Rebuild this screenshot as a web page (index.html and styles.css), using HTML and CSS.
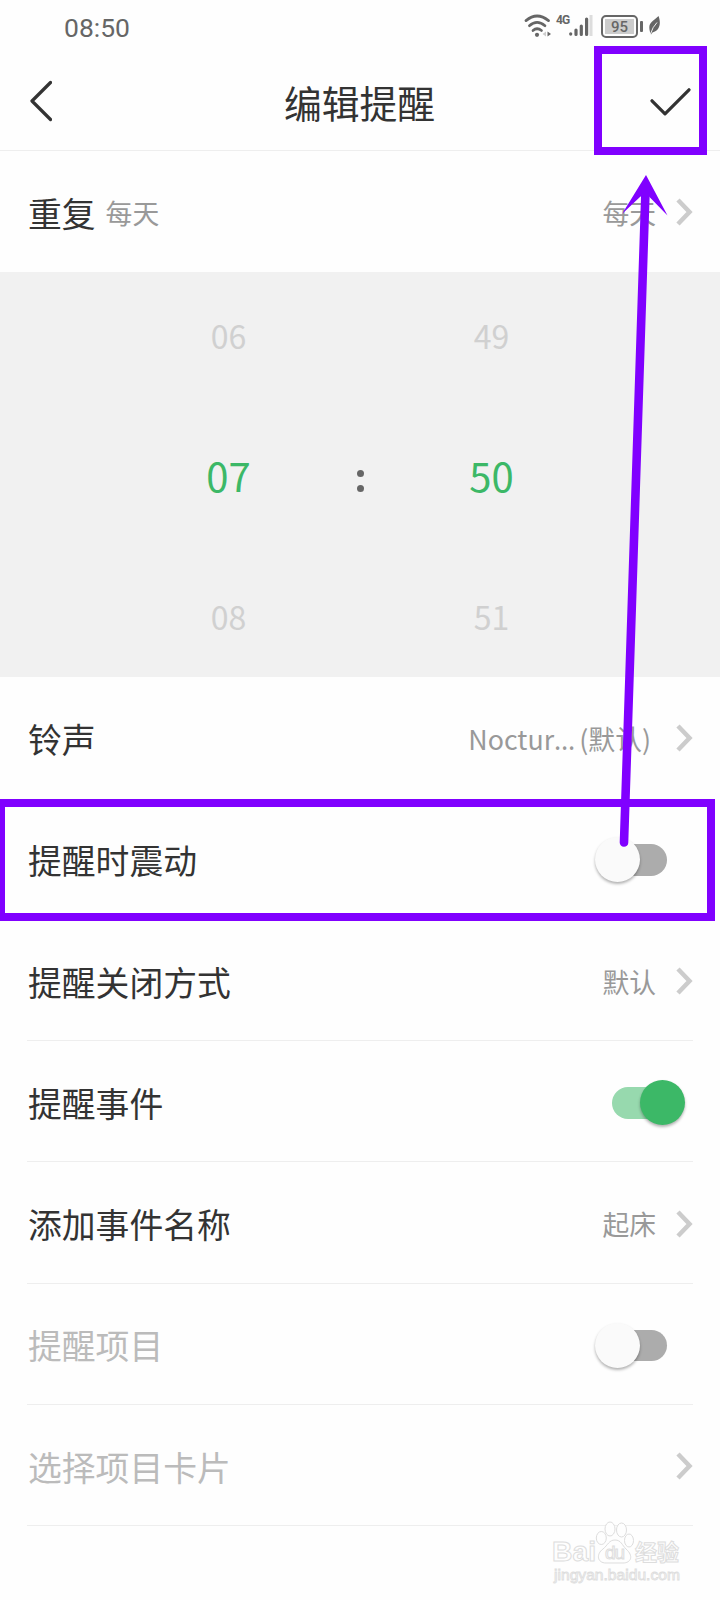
FILE: index.html
```html
<!DOCTYPE html>
<html lang="zh-CN">
<head>
    <meta charset="UTF-8">
    <meta name="viewport" content="width=device-width, initial-scale=1.0">
    <title>编辑提醒</title>
    <link rel="stylesheet" href="styles.css">
</head>
<body>
    <div class="status-bar">
        <span class="clock">08:50</span>
        <div class="status-icons">
            <svg class="wifi" width="27" height="24" viewBox="0 0 27 24">
                <g fill="none" stroke="#666" stroke-width="2.7" stroke-linecap="round">
                    <path d="M2 6.6Q13 -2.6 24.5 6.6"/>
                    <path d="M5.4 11.7Q13 5 21 11.7"/>
                    <path d="M9 16.5Q13 13 17.5 16.5"/>
                </g>
                <circle cx="13" cy="20.8" r="2.1" fill="#666"/>
                <path d="M22 17.5v5l-3.5-2.500z" fill="#ccc"/>
                <path d="M23.500 17.5v5l3.500-2.500z" fill="#666"/>
            </svg>
            <span class="network">4G</span>
            <svg class="signal" width="24" height="24" viewBox="0 0 24 24">
                <g stroke="#666" stroke-width="3.2" stroke-linecap="round">
                    <path d="M1.7 20.8v.3M7 17v4.5M12.300 13v8.500M17.600 6v15.500"/>
                </g>
                <path d="M22 2v21" stroke="#ddd" stroke-width="3"/>
            </svg>
            <div class="battery"><span class="battery-level">95</span></div>
            <svg class="leaf" width="13" height="20" viewBox="0 0 13 20">
                <path d="M10.500 1C13 7 12.500 15.500 4.500 17.500L3 19.500 2 17C-.5 8 4 7 10.500 1z" fill="#666"/>
                <path d="M2.500 19Q4.500 12 9 7.500" fill="none" stroke="#fefefe" stroke-width=".9"/>
            </svg>
        </div>
    </div>

    <div class="header">
        <svg class="back" width="24" height="42" viewBox="0 0 24 42">
            <path d="M22.500 2.500L4 21l18.500 18.500"/>
        </svg>
        <h1 class="title">编辑提醒</h1>
        <svg class="confirm" width="42" height="30" viewBox="0 0 42 30">
            <path d="M3 14.800L16 27.800 40 3.800"/>
        </svg>
    </div>

    <div class="row plain">
        <span class="label">重复</span>
        <span class="note">每天</span>
        <span class="value">每天</span>
        <svg class="arrow" width="17" height="28" viewBox="0 0 17 28"><path d="M2 2l11.500 12L2 26"/></svg>
    </div>

    <div class="picker">
        <div class="wheel">
            <span>06</span>
            <span class="selected">07</span>
            <span>08</span>
        </div>
        <div class="colon"><i></i><i></i></div>
        <div class="wheel">
            <span>49</span>
            <span class="selected">50</span>
            <span>51</span>
        </div>
    </div>

    <div class="list">
        <div class="row plain">
            <span class="label">铃声</span>
            <span class="value ringtone">Noctur<span class="dots">…</span>(默认)</span>
            <svg class="arrow" width="17" height="28" viewBox="0 0 17 28"><path d="M2 2l11.500 12L2 26"/></svg>
        </div>
        <div class="row plain">
            <span class="label">提醒时震动</span>
            <span class="switch"></span>
        </div>
        <div class="row">
            <span class="label">提醒关闭方式</span>
            <span class="value">默认</span>
            <svg class="arrow" width="17" height="28" viewBox="0 0 17 28"><path d="M2 2l11.500 12L2 26"/></svg>
        </div>
        <div class="row">
            <span class="label">提醒事件</span>
            <span class="switch on"></span>
        </div>
        <div class="row">
            <span class="label">添加事件名称</span>
            <span class="value">起床</span>
            <svg class="arrow" width="17" height="28" viewBox="0 0 17 28"><path d="M2 2l11.500 12L2 26"/></svg>
        </div>
        <div class="row disabled">
            <span class="label">提醒项目</span>
            <span class="switch"></span>
        </div>
        <div class="row disabled">
            <span class="label">选择项目卡片</span>
            <svg class="arrow" width="17" height="28" viewBox="0 0 17 28"><path d="M2 2l11.500 12L2 26"/></svg>
        </div>
    </div>

    <!-- watermark -->
    <svg class="watermark" width="150" height="70" viewBox="0 0 150 70">
        <g class="outline">
            <ellipse cx="51.300" cy="20" rx="5" ry="6.500"/>
            <ellipse cx="60" cy="11" rx="5" ry="7"/>
            <ellipse cx="71.500" cy="12" rx="5" ry="7"/>
            <ellipse cx="79" cy="22.500" rx="4.500" ry="6.500"/>
            <path d="M65 22c6 0 7 5 11 9 8 7 5 14-3 14H56c-9 0-10-9-3-14 5-4 6-9 12-9z"/>
            <text class="brand" x="2" y="43" textLength="44" lengthAdjust="spacingAndGlyphs">Bai</text>
            <text class="brand-du" x="55" y="41" textLength="20">du</text>
            <text class="brand-cn" x="85" y="42" textLength="44">经验</text>
            <text class="site" x="4" y="61.500" textLength="126" lengthAdjust="spacingAndGlyphs">jingyan.baidu.com</text>
        </g>
    </svg>

    <!-- marks over the screen: confirm button, vibration row, arrow between them -->
    <div class="mark mark-confirm"></div>
    <div class="mark mark-row"></div>
    <svg class="mark-arrow" width="60" height="690" viewBox="610 170 60 690">
        <path d="M645.300 197L624 842.500" stroke="#8000ff" stroke-width="8.600" stroke-linecap="round"/>
        <path d="M646 175L667.500 215.500 649 196.500 640.500 196.500 622 214z" fill="#8000ff"/>
    </svg>
</body>
</html>
```
FILE: styles.css
```css
* {
    box-sizing: border-box;
}
body {
    position: relative;
    margin: 0;
    width: 720px;
    height: 1600px;
    overflow: hidden;
    background-color: #fefefe;
    color: #333;
    font-family: "Noto Sans CJK SC", sans-serif;
}
svg {
    display: block;
    flex: none;
}

/* status bar */
.status-bar {
    display: flex;
    justify-content: space-between;
    height: 51px;
    padding: 12px 59px 0 64px;
    color: #666;
}
.clock {
    font-family: Roboto, sans-serif;
    font-size: 26.5px;
    line-height: 31px;
}
.status-icons {
    display: flex;
    align-items: flex-start;
}
.wifi {
    margin-top: 2px;
}
.network {
    width: 13px;
    margin: 2px 0 0 5px;
    font: bold 12px/12px Roboto, sans-serif;
    letter-spacing: -1px;
}
.signal {
    margin-top: 1px;
}
.battery {
    position: relative;
    width: 37px;
    height: 23px;
    margin: 3px 0 0 8px;
    padding: 2px;
    border: 2px solid #666;
    border-radius: 5px;
}
.battery::after {
    content: "";
    position: absolute;
    top: 4px;
    right: -7px;
    width: 3px;
    height: 11px;
    border-radius: 1px;
    background-color: #666;
}
.battery-level {
    display: block;
    height: 15px;
    background-color: #ccc;
    font: 500 15px/16px Roboto, sans-serif;
    text-align: center;
}
.leaf {
    margin: 3px 0 0 10px;
}

/* header */
.header {
    display: flex;
    align-items: center;
    justify-content: space-between;
    height: 100px;
    padding: 0 29px 0 28px;
    border-bottom: 1px solid #eee;
}
.header path {
    fill: none;
    stroke: #333;
    stroke-width: 3.2;
    stroke-linecap: round;
    stroke-linejoin: round;
}
.back {
    margin-top: 1px;
}
.confirm {
    margin-left: -18px;
}
.title {
    margin: 2px 0 0;
    font-size: 37.8px;
    font-weight: 400;
    line-height: 54px;
}

/* setting rows */
.row {
    display: flex;
    align-items: center;
    height: 121.3px;
    margin: 0 27px;
    border-bottom: 1px solid #eee;
}
.plain {
    border-bottom-color: transparent;
}
.label {
    margin: 2px 0 0 1px;
    font-size: 33.8px;
}
.note {
    margin: 2px 0 0 10px;
    color: #999;
    font-size: 26.8px;
}
.value {
    margin: 2px 20px 0 auto;
    color: #999;
    font-size: 26.8px;
}
.ringtone {
    margin-right: 25px;
}
.dots {
    font-family: "Noto Sans", sans-serif;
    letter-spacing: 4px;
}
.arrow {
    margin: 2px 0 0 auto;
}
.value + .arrow {
    margin-left: 0;
}
.arrow path {
    fill: none;
    stroke: #ccc;
    stroke-width: 4.5;
}
.disabled .label {
    color: #bbb;
}

/* time picker */
.picker {
    display: flex;
    justify-content: center;
    height: 405px;
    padding-top: 1px;
    background-color: #f1f1f1;
}
.wheel {
    display: flex;
    flex-direction: column;
    align-items: center;
    justify-content: center;
    width: 256px;
    color: #d0d0d0;
    font-size: 32px;
}
.wheel span {
    height: 140.5px;
    line-height: 140.5px;
}
.wheel .selected {
    color: #3cb867;
    font-size: 40px;
}
.colon {
    display: flex;
    flex-direction: column;
    justify-content: center;
    gap: 7.5px;
    width: 7px;
    padding-top: 11px;
}
.colon i {
    height: 7px;
    border-radius: 50%;
    background-color: #666;
}

/* switches */
.switch {
    position: relative;
    width: 66px;
    height: 31.5px;
    margin: 3px 26px 0 auto;
    border-radius: 16px;
    background-color: #acacac;
}
.switch::after {
    content: "";
    position: absolute;
    top: -7px;
    left: -6.5px;
    width: 45px;
    height: 45px;
    border-radius: 50%;
    background-color: #fafafa;
    box-shadow: 0 2px 3px rgba(0, 0, 0, .3);
}
.switch.on {
    margin-right: 15px;
    background-color: #97d9ae;
}
.switch.on::after {
    left: 28px;
    background-color: #3cb867;
}

.watermark {
    position: absolute;
    left: 550px;
    top: 1518px;
}
.outline {
    fill: #fefefe;
    stroke: #ddd;
    stroke-width: 1;
    font-family: "Liberation Sans", sans-serif;
}
.brand {
    font-size: 27px;
    font-weight: bold;
}
.brand-du {
    font-size: 19px;
}
.brand-cn {
    font: bold 22px "Noto Sans CJK SC", sans-serif;
}
.site {
    font-size: 14px;
    stroke-width: .8;
}

.mark {
    position: absolute;
    border: 8.5px solid #8000ff;
}
.mark-confirm {
    left: 594px;
    top: 46px;
    width: 113px;
    height: 109px;
}
.mark-row {
    left: -3px;
    top: 799px;
    width: 718px;
    height: 122px;
}
.mark-arrow {
    position: absolute;
    left: 610px;
    top: 170px;
}
```
